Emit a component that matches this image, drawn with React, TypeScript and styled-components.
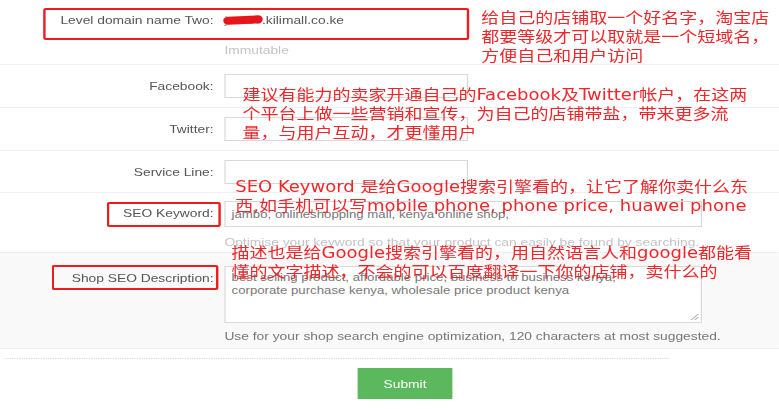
import React from 'react';
import styled, { createGlobalStyle } from 'styled-components';

const GlobalStyle = createGlobalStyle`
  html, body {
    margin: 0;
    padding: 0;
    background: #fff;
    overflow: hidden;
  }
  body {
    font-family: "Liberation Sans", Arial, sans-serif;
  }
`;

/* the screenshot is stretched sideways, so the form is drawn narrow and widened */
const Page = styled.div`
  position: relative;
  width: 649px;
  height: 409px;
  transform: scaleX(1.2);
  transform-origin: 0 0;
`;

const Row = styled.div<{ $height: number; $shade?: boolean }>`
  display: grid;
  grid-template-columns: 178px 1fr;
  column-gap: 9px;
  align-content: start;
  height: ${p => p.$height}px;
  box-sizing: border-box;
  padding-top: ${p => (p.$shade ? 13 : 9)}px;
  border-bottom: 1px solid #efefef;
  background: ${p => (p.$shade ? '#f9f9f9' : 'transparent')};
`;

const TopRow = styled(Row)`
  padding-top: 8px;
`;

const Label = styled.div`
  text-align: right;
  font-size: 11.5px;
  color: #555;
  line-height: 24px;
  white-space: nowrap;
`;

const Value = styled.div`
  font-size: 11.5px;
  color: #555;
  line-height: 24px;
  white-space: nowrap;
  position: relative;
`;

const Scribble = styled.span`
  position: absolute;
  left: -1px;
  top: 8px;
  width: 33px;
  height: 8px;
  border-radius: 4px;
  background: #e8141a;
  transform: rotate(-3deg);
`;

const Hidden = styled.span`
  color: #999;
`;

const Field = styled.div`
  grid-column: 2;
`;

const Input = styled.div<{ $wide?: boolean; $height?: number }>`
  width: ${p => (p.$wide ? 398 : 203)}px;
  height: ${p => p.$height ?? 24}px;
  box-sizing: border-box;
  border: 1px solid #d9d9d9;
  background: #fff;
  padding: 4px 5px;
  font-size: 11px;
  line-height: 13px;
  color: #777;
  position: relative;
`;

const Grip = styled.svg`
  position: absolute;
  right: 1px;
  bottom: 1px;
`;

const Help = styled.div<{ $dark?: boolean; $gap?: number }>`
  grid-column: 2;
  font-size: 11.5px;
  color: ${p => (p.$dark ? '#777' : '#c4c4c4')};
  margin-top: ${p => p.$gap ?? (p.$dark ? 7 : 9)}px;
  white-space: nowrap;
`;

const Footer = styled.div`
  margin: 9px 92px 0 4px;
  border-top: 1px dotted #d6d6d6;
  padding-top: 9px;
  display: flex;
  justify-content: flex-start;
  padding-left: 294px;
`;

const SubmitButton = styled.button`
  width: 79px;
  height: 31px;
  border: none;
  background: #5cb85c;
  color: #fff;
  font-family: "Liberation Sans", Arial, sans-serif;
  font-size: 11.5px;
  cursor: pointer;
`;

const Mark = styled.div<{ $x: number; $y: number; $w: number; $h: number }>`
  position: absolute;
  left: ${p => p.$x}px;
  top: ${p => p.$y}px;
  width: ${p => p.$w}px;
  height: ${p => p.$h}px;
  box-sizing: border-box;
  border: 2px solid #ee1c1c;
  border-radius: 2px;
`;

const Note = styled.div<{ $x: number; $y: number }>`
  position: absolute;
  left: ${p => p.$x}px;
  top: ${p => p.$y}px;
  font-family: "DejaVu Sans", "Noto Sans CJK SC", sans-serif;
  font-size: 15px;
  line-height: 19px;
  color: #f0262a;
  white-space: nowrap;
`;

const App: React.FC = () => {
  return (
    <>
      <GlobalStyle />
      <Page>
        <TopRow $height={65}>
          <Label>Level domain name Two:</Label>
          <Value>
            <Scribble />
            <Hidden>jambo</Hidden>.kilimall.co.ke
          </Value>
          <Help $gap={12}>Immutable</Help>
        </TopRow>

        <Row $height={43}>
          <Label>Facebook:</Label>
          <Field>
            <Input />
          </Field>
        </Row>

        <Row $height={43}>
          <Label>Twitter:</Label>
          <Field>
            <Input />
          </Field>
        </Row>

        <Row $height={42}>
          <Label>Service Line:</Label>
          <Field>
            <Input />
          </Field>
        </Row>

        <Row $height={60} style={{ paddingTop: 8 }}>
          <Label>SEO Keyword:</Label>
          <Field>
            <Input $wide $height={26} style={{ paddingTop: 6 }}>
              jambo, onlineshopping mall, kenya online shop,
            </Input>
          </Field>
          <Help>Optimise your keyword so that your product can easily be found by searching.</Help>
        </Row>

        <Row $height={96} $shade>
          <Label>Shop SEO Description:</Label>
          <Field>
            <Input $wide $height={57}>
              best selling product, affordable price, business to business kenya,
              <br />
              corporate purchase kenya, wholesale price product kenya
              <Grip width="8" height="8" viewBox="0 0 8 8">
                <path d="M7 1 L1 7 M7 4 L4 7" stroke="#aaa" strokeWidth="1" />
              </Grip>
            </Input>
          </Field>
          <Help $dark>Use for your shop search engine optimization, 120 characters at most suggested.</Help>
        </Row>

        <Footer>
          <SubmitButton>Submit</SubmitButton>
        </Footer>

        <Mark $x={36} $y={8} $w={355} $h={32} />
        <Mark $x={89} $y={202} $w={95} $h={25} />
        <Mark $x={43} $y={265} $w={139} $h={25} />

        <Note $x={401} $y={9}>
          给自己的店铺取一个好名字，淘宝店
          <br />
          都要等级才可以取就是一个短域名，
          <br />
          方便自己和用户访问
        </Note>
        <Note $x={202} $y={86}>
          建议有能力的卖家开通自己的Facebook及Twitter帐户，在这两
          <br />
          个平台上做一些营销和宣传，为自己的店铺带盐，带来更多流
          <br />
          量，与用户互动，才更懂用户
        </Note>
        <Note $x={196} $y={178}>
          SEO Keyword 是给Google搜索引擎看的，让它了解你卖什么东
          <br />
          西,如手机可以写mobile phone, phone price, huawei phone
        </Note>
        <Note $x={193} $y={244}>
          描述也是给Google搜索引擎看的，用自然语言人和google都能看
          <br />
          懂的文字描述，不会的可以百度翻译一下你的店铺，卖什么的
        </Note>
      </Page>
    </>
  );
};

export default App;
